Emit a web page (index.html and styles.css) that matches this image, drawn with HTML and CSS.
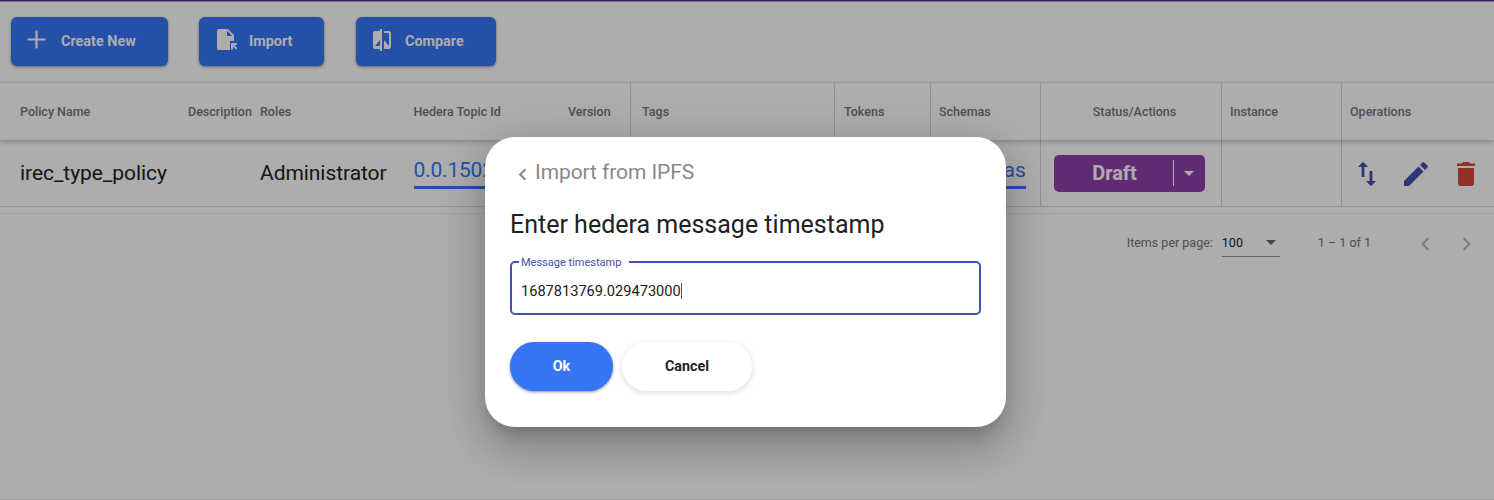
FILE: index.html
```html
<!DOCTYPE html>
<html lang="en">
<head>
<meta charset="utf-8">
<title>Policies</title>
<link rel="stylesheet" href="styles.css">
</head>
<body>
<main class="page">
  <div class="toolbar">
    <button class="tool create"><svg width="20" height="20" viewBox="0 0 20 20"><path d="M9.500 .5v18M.5 9.500h18" stroke="#fff" stroke-width="2.200" fill="none"/></svg><span>Create New</span></button>
    <button class="tool import"><svg width="22" height="24" viewBox="0 0 22 24"><path fill="#fff" fill-rule="evenodd" d="M3 1h9l6 6v6h-4v9H3a2 2 0 0 1-2-2V3a2 2 0 0 1 2-2zm8 1.800V8h5.200zM15 15h6v2h-2.700l3.100 3.100-1.500 1.500-3-3V21.500H15z"/></svg><span>Import</span></button>
    <button class="tool compare"><svg width="24" height="24" viewBox="0 0 24 24"><path fill="#fff" d="M10 3H5c-1.100 0-2 .9-2 2v14c0 1.100.9 2 2 2h5v2h2V1h-2v2zm0 15H5l5-6v6zm9-15h-5v2h5v13l-5-6v9h5c1.100 0 2-.9 2-2V5c0-1.100-.9-2-2-2z"/></svg><span>Compare</span></button>
  </div>
  <div class="grid head">
    <div class="c-name">Policy Name</div><div>Description</div><div>Roles</div><div>Hedera Topic Id</div><div>Version</div>
    <div class="ruled c-tags">Tags</div><div class="ruled">Tokens</div><div class="ruled c-schemas">Schemas</div>
    <div class="ruled c-status">Status/Actions</div><div class="ruled c-instance">Instance</div><div class="ruled c-ops">Operations</div>
  </div>
  <div class="grid row">
    <div class="c-name">irec_type_policy</div><div></div><div>Administrator</div><div><a class="link">0.0.15024</a></div><div></div>
    <div class="ruled"></div><div class="ruled"></div><div class="ruled c-schemas"><a class="link schemas">Schemas</a></div>
    <div class="ruled c-status"><button class="draft"><span class="draft-label">Draft</span><span class="draft-arrow"><i class="caret"></i></span></button></div>
    <div class="ruled"></div>
    <div class="ruled ops">
      <svg width="20" height="26" viewBox="0 0 20 26"><path fill="#4350b3" d="M6 .8l5 5.200H7.400v10H4.600V6H1zM14 25.200l-5-5.200h3.600V10h2.800v10H19z"/></svg>
      <svg width="24" height="24" viewBox="0 0 24 24"><path fill="#4350b3" d="M0 19v5h5L19.500 9.500l-5-5zM23.500 5.600a1.300 1.300 0 0 0 0-1.900L20.300.5a1.300 1.300 0 0 0-1.900 0L16 3l5 5z"/></svg>
      <svg width="18" height="24" viewBox="0 0 18 24"><path fill="#d8493a" d="M1 6v15.400C1 22.800 2 24 3.500 24h11c1.400 0 2.500-1.200 2.500-2.600V6zM18 1.400h-4.600L12 0H6L4.600 1.400H0V4h18z"/></svg>
    </div>
  </div>
  <div class="pager">
    <span class="per-page">Items per page:</span>
    <span class="select">100<i class="caret"></i></span>
    <span class="range">1 – 1 of 1</span>
    <svg class="prev" width="10" height="14" viewBox="0 0 10 14"><path d="M8.500 1L2.500 7l6 6"/></svg>
    <svg class="next" width="10" height="14" viewBox="0 0 10 14"><path d="M1.500 1l6 6-6 6"/></svg>
  </div>
</main>
<div class="backdrop">
  <section class="dialog">
    <div class="back"><svg width="9" height="13" viewBox="0 0 9 13"><path d="M7.500 1.200L2 6.500l5.500 5.300"/></svg><span>Import from IPFS</span></div>
    <h1>Enter hedera message timestamp</h1>
    <fieldset class="field"><legend>Message timestamp</legend><span class="value">1687813769.029473000</span></fieldset>
    <div class="actions"><button class="pill ok">Ok</button><button class="pill cancel">Cancel</button></div>
  </section>
</div>
</body>
</html>
```
FILE: styles.css
```css
* { box-sizing: border-box; }
body { margin: 0; height: 500px; overflow: hidden; font-family: Roboto, sans-serif; background: #fff; color: #212121; }
button { border: 0; padding: 0; font-family: inherit; }
svg { display: block; flex: none; }
.page { height: 500px; border-top: 1px solid #5b2b91; border-bottom: 1px solid #eee; box-shadow: inset 0 1px #b9a5cc; }
.toolbar { height: 82px; padding: 16px 0 0 11px; display: flex; align-items: flex-start; border-bottom: 1px solid #ececec; }
.tool { height: 49px; display: flex; align-items: center; border-radius: 6px; background: #3576f7; color: #fff; font-size: 14.400px; font-weight: 700; box-shadow: 0 1px 3px rgba(0,0,0,.45); }
.tool span { margin-top: 1px; line-height: 16px; }
.create { width: 157px; padding-left: 16px; margin-right: 31px; gap: 14px; }
.import { width: 125px; padding-left: 17px; margin-right: 32px; gap: 11px; }
.compare { width: 140px; padding-left: 14px; gap: 11px; }
.tool svg { margin-top: -3px; }
.grid { display: grid; grid-template-columns: 188px 72px 153.500px 154.500px 62px 204px 96px 110px 181px 120px 153px; }
.grid > div { display: flex; align-items: center; white-space: nowrap; }
.grid .c-name { padding-left: 20px; }
.grid > .ruled { border-left: 1px solid #d6d6d6; padding-left: 9px; }
.grid .c-tags { padding-left: 11px; }
.grid .c-schemas { padding-left: 8px; }
.grid .c-status { padding-left: 0; justify-content: center; }
.grid .c-instance, .grid .c-ops { padding-left: 8px; }
.head { position: relative; height: 57px; font-size: 12.500px; font-weight: 500; color: #757575; box-shadow: 0 2px 5px rgba(0,0,0,.24); }
.head .c-status { padding-left: 7px; }
.row { height: 67px; font-size: 21px; letter-spacing: -.06px; border-bottom: 1px solid #dadada; }
.link { height: 32px; margin-top: -1px; border-bottom: 3px solid #3576f7; color: #3576f7; line-height: 27px; letter-spacing: -.2px; }
.schemas { letter-spacing: 0; }
.draft { width: 151px; height: 37px; margin-right: 4px; border-radius: 5px; background: #913ea9; color: #fff; display: flex; align-items: center; font-size: 20px; font-weight: 700; }
.draft-label { width: 119px; padding-left: 3px; text-align: center; }
.draft-arrow { width: 32px; height: 26px; border-left: 1px solid #fff; display: flex; align-items: center; justify-content: center; }
.caret { border: 5px solid transparent; border-top-color: currentColor; border-bottom: 0; }
.grid > .ops { padding: 1px 0 0 15px; }
.ops svg + svg { margin-left: 27px; }
.ops svg:last-child { margin-left: 29px; }
.pager { height: 52px; margin-top: 6px; padding: 6px 22px 0 0; border-top: 1px solid #ececec; display: flex; align-items: center; justify-content: flex-end; font-size: 12.500px; color: #757575; }
.select { width: 58px; height: 28px; margin: 0 38px 0 9px; padding-right: 4px; border-bottom: 1px solid #999; color: #212121; display: flex; align-items: center; justify-content: space-between; }
.select .caret { color: #666; }
.pager path, .back path { fill: none; stroke: #888; stroke-width: 2; }
.pager path { stroke: #b5b5b5; }
.pager svg { margin-top: 2px; }
.prev { margin-left: 49px; }
.next { margin-left: 32px; }
.backdrop { position: absolute; inset: 0; background: rgba(0,0,0,.32); }
.dialog { width: 521px; height: 290px; margin: 137px 0 0 485px; padding: 22px 25px 0; border-radius: 30px; background: #fff; box-shadow: 0 11px 15px -7px rgba(0,0,0,.2), 0 24px 38px 3px rgba(0,0,0,.14), 0 9px 46px 8px rgba(0,0,0,.12); }
.back { height: 26px; padding-left: 8px; display: flex; align-items: center; gap: 8px; color: #888; font-size: 21px; letter-spacing: -.08px; }
.back svg { margin-top: 4px; }
h1 { height: 32px; margin: 24px 0 13px; font-size: 25px; font-weight: 400; line-height: 32px; white-space: nowrap; }
.field { height: 61px; margin: 0; padding: 0 7px; border: 2px solid #444fb5; border-radius: 5px; }
legend { height: 16px; padding: 1px 8px 0 2px; font-size: 11px; line-height: 16px; color: #444fb5; }
.value { display: inline-block; margin: 13px 0 0 2px; border-right: 1px solid #444fb5; font-size: 14.600px; line-height: 16px; }
.actions { display: flex; gap: 9px; margin-top: 27px; }
.pill { height: 49px; padding-bottom: 1px; border-radius: 25px; font-size: 14.300px; font-weight: 700; line-height: 16px; }
.ok { width: 103px; background: #3576f7; color: #fff; box-shadow: 0 1px 3px rgba(0,0,0,.45); }
.cancel { width: 130px; background: #fff; color: #212121; box-shadow: 0 2px 6px rgba(0,0,0,.14); }
```
